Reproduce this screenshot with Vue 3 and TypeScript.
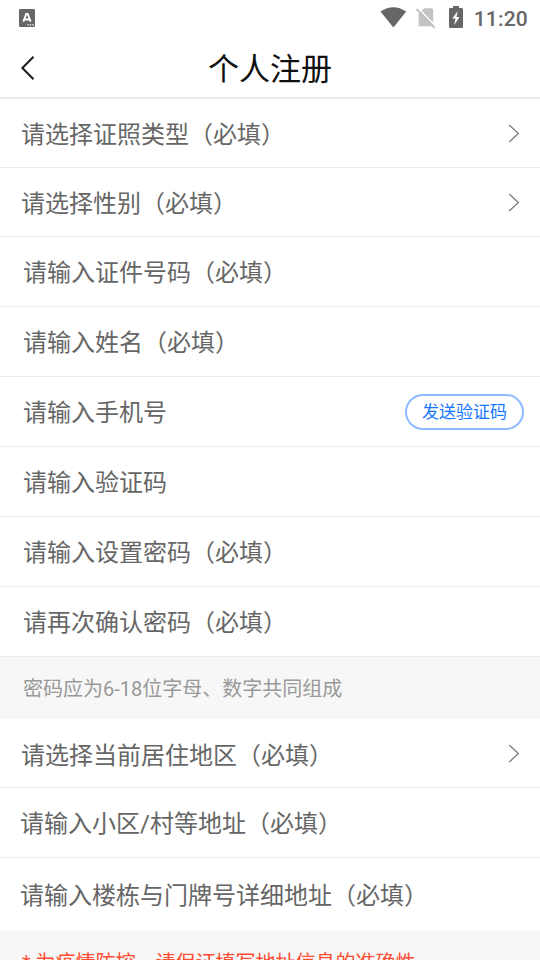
<script setup lang="ts">
interface Field {
  label: string
  kind: 'select' | 'input' | 'address' | 'detail'
  action?: string
}

const identityFields: Field[] = [
  { label: '请选择证照类型（必填）', kind: 'select' },
  { label: '请选择性别（必填）', kind: 'select' },
  { label: '请输入证件号码（必填）', kind: 'input' },
  { label: '请输入姓名（必填）', kind: 'input' },
  { label: '请输入手机号', kind: 'input', action: '发送验证码' },
  { label: '请输入验证码', kind: 'input' },
  { label: '请输入设置密码（必填）', kind: 'input' },
  { label: '请再次确认密码（必填）', kind: 'input' },
]

const addressFields: Field[] = [
  { label: '请选择当前居住地区（必填）', kind: 'select' },
  { label: '请输入小区/村等地址（必填）', kind: 'address' },
  { label: '请输入楼栋与门牌号详细地址（必填）', kind: 'detail' },
]

const groups = [
  { name: 'identity', fields: identityFields, note: '密码应为6-18位字母、数字共同组成', tone: 'tip' },
  { name: 'region', fields: addressFields, note: '* 为疫情防控，请保证填写地址信息的准确性', tone: 'warning' },
]
</script>

<template>
  <main class="screen">
    <div class="status-bar">
      <svg class="ime" width="16" height="18" viewBox="0 0 16 18">
        <rect width="16" height="18" rx="1.2" fill="#666" />
        <path d="M4.3 12.7 7.3 5h1.4l3 7.7M5.6 10.5h4.8" fill="none" stroke="#fff" stroke-width="1.8" />
        <path d="M8.4 15.8h1.4m1 0h1.4m1 0h1.4" stroke="#fff" stroke-width="1.3" />
      </svg>
      <div class="indicators">
        <svg class="wifi" width="27" height="21" viewBox="0 0 27 21">
          <path d="M.5 4.6Q13.3-4.3 26.2 4.6L13.4 20.6z" fill="#666" />
        </svg>
        <svg class="sim" width="20" height="22" viewBox="0 0 20 22">
          <path d="M8.2 1.2h7.3q1.7 0 1.7 1.6v16.5H2.6V6.8z" fill="#c4c4c4" />
          <path d="M1.6.6 20.4 19.9" stroke="#fff" stroke-width="1.4" />
          <path d="M.6 2 18.6 20.8" stroke="#bdbdbd" stroke-width="1.8" />
        </svg>
        <svg class="battery" width="14" height="22" viewBox="0 0 14 22">
          <path d="M4 0h6v2h2.8q1.2 0 1.2 1.2v17.6q0 1.2-1.2 1.2H1.2Q0 22 0 20.8V3.2Q0 2 1.2 2H4z" fill="#666" />
          <path d="M8.7 5 3.4 12.6h3L5.2 19l5.4-8.1H7.5z" fill="#fff" />
        </svg>
        <span class="clock">11:20</span>
      </div>
    </div>

    <header class="title-bar">
      <svg class="back" width="16" height="26" viewBox="0 0 16 26">
        <path d="M13.5 1.8 2.4 13l11.1 11.2" fill="none" stroke="#1b1b1b" stroke-width="2" />
      </svg>
      <h1>个人注册</h1>
    </header>

    <section v-for="group in groups" :key="group.name" :class="group.name">
      <div v-for="field in group.fields" :key="field.label" class="row" :class="field.kind">
        <span class="label">{{ field.label }}</span>
        <svg v-if="field.kind === 'select'" class="chevron" width="12" height="20" viewBox="0 0 12 20">
          <path d="m1.2 2 9.1 8.5-9.1 8.5" fill="none" stroke="#858585" stroke-width="1.5" />
        </svg>
        <button v-if="field.action" type="button">{{ field.action }}</button>
      </div>
      <p class="note" :class="group.tone">{{ group.note }}</p>
    </section>
  </main>
</template>

<style>
body {
  margin: 0;
  overflow: hidden;
}
</style>

<style scoped>
.screen {
  box-sizing: border-box;
  width: 540px;
  height: 960px;
  overflow: hidden;
  background: #fff;
  color: #666;
  font-family: Roboto, "Noto Sans CJK SC", sans-serif;
}

svg {
  display: block;
  flex: none;
}

.status-bar {
  display: flex;
  justify-content: space-between;
  box-sizing: border-box;
  height: 38px;
  padding: 7px 12px 0 19px;
}

.ime {
  margin-top: 2px;
}

.indicators {
  display: flex;
}

.sim {
  margin-left: 9px;
}

.battery {
  margin: -1px 11px 0 13px;
}

.clock {
  font-size: 21px;
  font-weight: 500;
  line-height: 24px;
  letter-spacing: 0.2px;
}

.title-bar {
  display: grid;
  grid-template-columns: 54px 1fr 54px;
  align-items: center;
  box-sizing: border-box;
  height: 61px;
  border-bottom: 2px solid #ebebeb;
}

.back {
  margin-left: 20px;
}

h1 {
  margin: 0;
  padding-top: 4px;
  color: #111;
  font-size: 31px;
  font-weight: 400;
  line-height: 44px;
  text-align: center;
}

.row {
  display: flex;
  align-items: center;
  justify-content: space-between;
  box-sizing: border-box;
  height: 70px;
  padding: 0 16px 0 23px;
  border-bottom: 1px solid #ebebeb;
  font-size: 24px;
  line-height: 36px;
  white-space: nowrap;
}

.label {
  padding-top: 2px;
}

.select {
  height: 69px;
  padding: 0 20px 0 21px;
}

.select .label {
  padding-top: 3px;
}

.region .select .label {
  padding-top: 5px;
}

.address {
  padding-left: 20px;
}

.detail {
  height: 73px;
  padding-left: 20px;
  border-bottom: 0;
}

.detail .label {
  padding-top: 3px;
}

button {
  box-sizing: border-box;
  width: 119px;
  height: 36px;
  padding: 0;
  border: 2px solid #8dbcff;
  border-radius: 18px;
  background: #fff;
  color: #1677ff;
  font: inherit;
  font-size: 17px;
  line-height: 30px;
}

.note {
  box-sizing: border-box;
  height: 62px;
  margin: 0;
  padding: 1px 23px 0;
  background: #f7f7f7;
  font-size: 20px;
  line-height: 62px;
  white-space: nowrap;
}

.tip {
  color: #999;
}

.warning {
  padding-left: 22px;
  color: #ff4d32;
}
</style>
